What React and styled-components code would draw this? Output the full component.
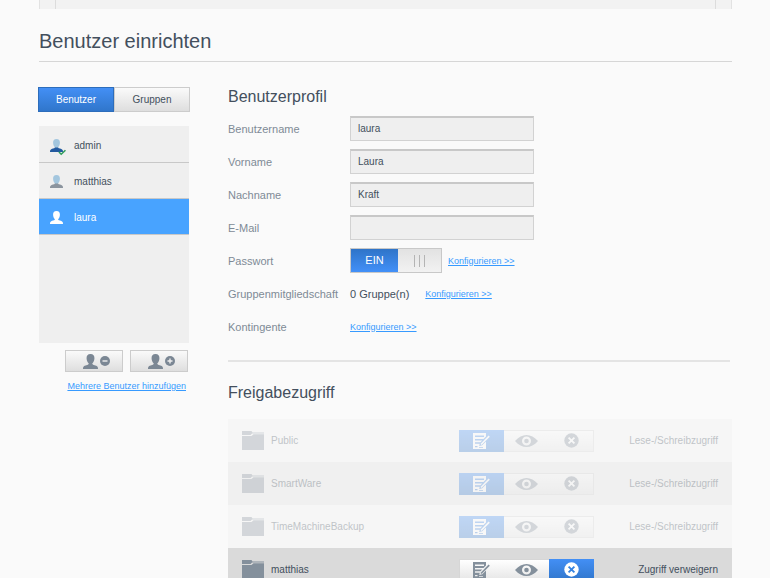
import React, { useState } from "react";
import styled, { createGlobalStyle, css } from "styled-components";

const users = [
  { name: "admin", role: "admin" },
  { name: "matthias", role: "user" },
  { name: "laura", role: "user" },
];

const initialShares = [
  { name: "Public", access: "write", locked: true },
  { name: "SmartWare", access: "write", locked: true },
  { name: "TimeMachineBackup", access: "write", locked: true },
  { name: "matthias", access: "deny", locked: false },
];

const accessLabels = {
  write: "Lese-/Schreibzugriff",
  read: "Schreibgeschützt",
  deny: "Zugriff verweigern",
};

const PERSON_HEAD = "M8 0C5 0 3.700 1.700 3.800 4.600c.1 2.600 1 4.400 2.300 5.400v2h3.800v-2c1.300-1 2.200-2.800 2.300-5.400C12.300 1.700 11 0 8 0z";
const PERSON_BODY = "M6 10.600C5.600 11.900 1.800 12 .8 13.200 0 14 0 15 0 16h16c0-1 0-2-.8-2.800C14.200 12 10.400 11.900 10 10.600z";

const PersonIcon = ({ head, body, size = 13, checked }) => (
  <PersonSvg width={size} height={size} viewBox="0 0 16 16" aria-hidden="true">
    <path d={PERSON_HEAD} fill={head} />
    <path d={PERSON_BODY} fill={body} />
    {checked && (
      <path d="M11 16l2.800 2.800 5.200-5" fill="none" stroke="#2f9e5b" strokeWidth="1.900" />
    )}
  </PersonSvg>
);

const SignIcon = ({ plus }) => (
  <svg width="10" height="10" viewBox="0 0 10 10" aria-hidden="true">
    <circle cx="5" cy="5" r="5" fill="#7b8794" />
    <path d={plus ? "M2.500 5h5M5 2.500v5" : "M2.500 5h5"} stroke="#eee" strokeWidth="1.400" />
  </svg>
);

const FolderIcon = () => (
  <svg width="22" height="19" viewBox="0 0 22 19" aria-hidden="true">
    <path d="M0 0h9.500l1 1.500H22v1H10l-1.500 1.500H0z" fill="#84909c" />
    <path d="M0 5h9.500l2-1.800H22V19H0z" fill="#84909c" />
  </svg>
);

const WriteIcon = () => (
  <svg width="17" height="16" viewBox="0 0 17 16" aria-hidden="true">
    <path
      d="M0 0h13v3.500L10.500 6H2v1.500h7.200L7.500 9.300H2v1.500h4.800l-.6 2.200 3-.8L13 8.500V16H0zM2 2.500V4h9V2.500zM2 13v1.200h2.500V13zM6 14v.8h4V14z"
      fill="currentColor"
      fillRule="evenodd"
    />
    <path d="M8 11.500L16.200 3.200" stroke="currentColor" strokeWidth="1.700" />
  </svg>
);

const EyeIcon = () => (
  <svg width="23" height="12" viewBox="0 0 23 12" aria-hidden="true">
    <path
      d="M0 6C3.500 2 7.500 0 11.500 0S19.500 2 23 6c-3.500 4-7.500 6-11.500 6S3.500 10 0 6zM11.500 1.500a4.500 4.500 0 1 0 0 9 4.500 4.500 0 0 0 0-9z"
      fill="currentColor"
      fillRule="evenodd"
    />
    <circle cx="11.500" cy="6" r="2.300" fill="currentColor" />
  </svg>
);

const DenyIcon = ({ cross }) => (
  <svg width="15" height="15" viewBox="0 0 15 15" aria-hidden="true">
    <circle cx="7.500" cy="7.500" r="7.200" fill="currentColor" />
    <path d="M4.600 4.600l5.800 5.800M10.400 4.600l-5.800 5.800" stroke={cross} strokeWidth="1.800" />
  </svg>
);

const UserIcon = ({ user, selected }) => {
  if (selected) return <PersonIcon head="#fff" body="#fff" />;
  if (user.role === "admin") return <PersonIcon head="#a3c6de" body="#235a9f" checked />;
  return <PersonIcon head="#a3c6de" body="#8b949e" />;
};

const AccessSwitch = ({ share, onChange }) => (
  <AccessGroup role="group" aria-label={`Zugriff ${share.name}`}>
    {["write", "read", "deny"].map((mode) => {
      const active = share.access === mode;
      return (
        <AccessButton
          key={mode}
          type="button"
          aria-label={accessLabels[mode]}
          aria-pressed={active}
          disabled={share.locked}
          $active={active}
          onClick={() => onChange(mode)}
        >
          {mode === "write" && <WriteIcon />}
          {mode === "read" && <EyeIcon />}
          {mode === "deny" && <DenyIcon cross={active ? "#3582e0" : "#fff"} />}
        </AccessButton>
      );
    })}
  </AccessGroup>
);

const App = () => {
  const [tab, setTab] = useState("Benutzer");
  const [selected, setSelected] = useState("laura");
  const [password, setPassword] = useState(true);
  const [shares, setShares] = useState(initialShares);

  const changeAccess = (name, access) =>
    setShares(shares.map((s) => (s.name === name ? { ...s, access } : s)));

  return (
    <Page>
      <GlobalStyle />
      <Carousel>
        <CarouselEdge />
        <CarouselBody />
        <CarouselEdge />
      </Carousel>
      <Title>Benutzer einrichten</Title>
      <Content>
        <Sidebar>
          <Tabs>
            {["Benutzer", "Gruppen"].map((name) => (
              <Tab key={name} type="button" $active={tab === name} onClick={() => setTab(name)}>
                {name}
              </Tab>
            ))}
          </Tabs>
          <UserList>
            {users.map((user) => (
              <li key={user.name}>
                <UserButton
                  type="button"
                  $active={selected === user.name}
                  onClick={() => setSelected(user.name)}
                >
                  <UserIcon user={user} selected={selected === user.name} />
                  {user.name}
                </UserButton>
              </li>
            ))}
          </UserList>
          <Actions>
            <ActionButton type="button" aria-label="Benutzer entfernen">
              <PersonIcon head="#7b8794" body="#7b8794" size={15} />
              <SignIcon />
            </ActionButton>
            <ActionButton type="button" aria-label="Benutzer hinzufügen">
              <PersonIcon head="#7b8794" body="#7b8794" size={15} />
              <SignIcon plus />
            </ActionButton>
          </Actions>
          <AddMany>
            <Link href="#add">Mehrere Benutzer hinzufügen</Link>
          </AddMany>
        </Sidebar>

        <Main>
          <Subtitle>Benutzerprofil</Subtitle>
          <Form>
            <Row>
              <Label htmlFor="username">Benutzername</Label>
              <Input id="username" defaultValue="laura" />
            </Row>
            <Row>
              <Label htmlFor="firstname">Vorname</Label>
              <Input id="firstname" defaultValue="Laura" />
            </Row>
            <Row>
              <Label htmlFor="lastname">Nachname</Label>
              <Input id="lastname" defaultValue="Kraft" />
            </Row>
            <Row>
              <Label htmlFor="email">E-Mail</Label>
              <Input id="email" type="email" />
            </Row>
            <Row>
              <Label htmlFor="password">Passwort</Label>
              <Toggle
                id="password"
                type="button"
                role="switch"
                aria-checked={password}
                $on={password}
                onClick={() => setPassword(!password)}
              >
                <ToggleText $on={password}>{password ? "EIN" : "AUS"}</ToggleText>
                <ToggleGrip>
                  <i />
                  <i />
                  <i />
                </ToggleGrip>
              </Toggle>
              <Link href="#password">Konfigurieren &gt;&gt;</Link>
            </Row>
            <Row>
              <Label as="span">Gruppenmitgliedschaft</Label>
              <Value>0 Gruppe(n)</Value>
              <Link href="#groups">Konfigurieren &gt;&gt;</Link>
            </Row>
            <Row>
              <Label as="span">Kontingente</Label>
              <Link href="#quota">Konfigurieren &gt;&gt;</Link>
            </Row>
          </Form>
          <Divider />
          <Subtitle>Freigabezugriff</Subtitle>
          <ShareTable>
            <tbody>
              {shares.map((share) => (
                <ShareRow key={share.name} $locked={share.locked}>
                  <NameCell>
                    <ShareName>
                      <FolderIcon />
                      {share.name}
                    </ShareName>
                  </NameCell>
                  <AccessCell>
                    <AccessSwitch
                      share={share}
                      onChange={(mode) => changeAccess(share.name, mode)}
                    />
                  </AccessCell>
                  <StateCell>
                    <span>{accessLabels[share.access]}</span>
                  </StateCell>
                </ShareRow>
              ))}
            </tbody>
          </ShareTable>
        </Main>
      </Content>
    </Page>
  );
};

export default App;

const GlobalStyle = createGlobalStyle`
  * {
    box-sizing: border-box;
  }

  body {
    margin: 0;
    background: #fafafa;
  }

  body, button, input {
    font-family: "Liberation Sans", Arial, sans-serif;
    font-size: 10px;
    color: #434f5d;
  }

  button {
    cursor: pointer;
    padding: 0;
  }
`;

const blue = css`
  background: linear-gradient(#438ff5, #3076cb);
`;

const grey = css`
  background: linear-gradient(#fafafa, #dedede);
`;

const Page = styled.div`
  height: 100vh;
  overflow: auto;
  scrollbar-width: none;
  padding: 0 38px 0 39px;
`;

const Carousel = styled.div`
  display: flex;
  height: 9px;
  background: #f2f2f2;
  border: solid #e2e2e2;
  border-width: 0 1px;
`;

const CarouselEdge = styled.div`
  width: 15px;
`;

const CarouselBody = styled.div`
  flex: 1;
  border: solid #dcdcdc;
  border-width: 0 1px;
`;

const Title = styled.h1`
  margin: 0;
  padding: 20px 0 8px;
  border-bottom: 1px solid #d6d6d6;
  font-size: 20px;
  line-height: 24px;
  font-weight: normal;
`;

const Content = styled.div`
  display: flex;
  gap: 39px;
  padding-top: 25px;
`;

const Sidebar = styled.div`
  flex: none;
  width: 150px;
`;

const Tabs = styled.div`
  display: flex;
  margin: 0 -1px 14px;
`;

const Tab = styled.button`
  flex: 1;
  height: 25px;
  border: 1px solid #ccc;
  ${grey}

  ${({ $active }) =>
    $active &&
    css`
      border-color: #2d6dbb;
      color: #fff;
      ${blue}
    `}
`;

const UserList = styled.ul`
  margin: 0;
  padding: 1px 0 0;
  height: 217px;
  list-style: none;
  background: #efefef;
`;

const UserButton = styled.button`
  display: flex;
  align-items: center;
  gap: 11px;
  width: 100%;
  height: 36px;
  padding: 1px 0 0 11px;
  border: none;
  border-bottom: 1px solid #c8c8c8;
  background: ${({ $active }) => ($active ? "#48a3ff" : "none")};
  color: ${({ $active }) => ($active ? "#fff" : "inherit")};
`;

const PersonSvg = styled.svg`
  overflow: visible;
`;

const Actions = styled.div`
  display: flex;
  justify-content: flex-end;
  gap: 7px;
  padding: 7px 1px 0 0;
`;

const ActionButton = styled.button`
  display: flex;
  align-items: center;
  justify-content: center;
  gap: 2px;
  width: 58px;
  height: 22px;
  padding-left: 5px;
  border: 1px solid #ccc;
  ${grey}
`;

const AddMany = styled.div`
  padding: 7px 3px 0 0;
  text-align: right;
`;

const Link = styled.a`
  font-size: 9px;
  line-height: 14px;
  color: #379aff;
  white-space: nowrap;
`;

const Main = styled.div`
  flex: 1;
  min-width: 0;
`;

const Subtitle = styled.h2`
  margin: 0;
  font-size: 16px;
  line-height: 20px;
  font-weight: normal;
`;

const Form = styled.form`
  padding: 5px 0 17px;
`;

const Row = styled.div`
  display: flex;
  align-items: center;
  height: 33px;
`;

const Label = styled.label`
  width: 122px;
  font-size: 11px;
  color: #7e8a96;
`;

const Input = styled.input`
  width: 184px;
  height: 25px;
  padding: 0 8px 1px 7px;
  border: 1px solid #d2d2d2;
  border-top: 2px solid #c8c8c8;
  background: #efefef;
  outline: none;
`;

const Toggle = styled.button`
  display: flex;
  flex-direction: ${({ $on }) => ($on ? "row" : "row-reverse")};
  width: 92px;
  height: 25px;
  margin-right: 6px;
  border: 1px solid #c8c8c8;
  background: #efefef;
`;

const ToggleText = styled.span`
  width: 47px;
  font-size: 11px;
  line-height: 23px;
  background: ${({ $on }) => ($on ? "linear-gradient(#2f74c8, #4290f8)" : "#ddd")};
  color: ${({ $on }) => ($on ? "#fff" : "inherit")};
`;

const ToggleGrip = styled.span`
  flex: 1;
  display: flex;
  align-items: center;
  justify-content: center;
  gap: 4px;
  height: 100%;
  background: linear-gradient(#e2e2e2, #f2f2f2);

  i {
    width: 1px;
    height: 12px;
    background: #b4b4b4;
  }
`;

const Value = styled.span`
  margin-right: 16px;
  font-size: 11px;
`;

const Divider = styled.hr`
  margin: 0 2px 21px 0;
  border: none;
  border-top: 2px solid #e4e4e4;
`;

const ShareTable = styled.table`
  width: 100%;
  margin-top: 16px;
  border-collapse: collapse;
`;

const ShareRow = styled.tr`
  height: 43px;
  background: ${({ $locked }) => ($locked ? "#f6f6f6" : "#dadada")};

  &:nth-child(2) {
    background: #f0f0f0;
  }

  td > * {
    opacity: ${({ $locked }) => ($locked ? 0.3 : 1)};
  }
`;

const NameCell = styled.td`
  padding: 0 0 0 14px;
`;

const ShareName = styled.div`
  display: flex;
  align-items: center;
  gap: 7px;
`;

const AccessCell = styled.td`
  width: 135px;
  padding: 0;
`;

const StateCell = styled.td`
  width: 138px;
  padding: 0 14px 0 0;
  text-align: right;
  white-space: nowrap;
`;

const AccessGroup = styled.div`
  display: flex;
  height: 22px;
  border: 1px solid #d6d6d6;
  background: linear-gradient(#fff, #e6e6e6);
`;

const AccessButton = styled.button`
  flex: 1;
  display: flex;
  align-items: center;
  justify-content: center;
  margin: -1px 0;
  border: none;
  background: none;
  color: #84909c;

  &:first-child {
    margin-left: -1px;
  }

  &:last-child {
    margin-right: -1px;
  }

  ${({ $active }) =>
    $active &&
    css`
      color: #fff;
      ${blue}
    `}
`;
